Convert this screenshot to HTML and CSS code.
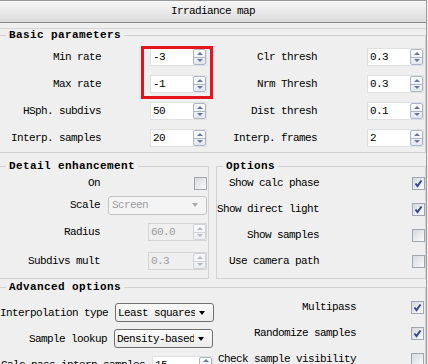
FILE: index.html
```html
<!DOCTYPE html>
<html lang="en">

<head>
    <meta charset="UTF-8">
    <meta name="viewport" content="width=device-width, initial-scale=1.0">
    <title>Irradiance map</title>
    <link rel="stylesheet" href="styles.css">
</head>

<body>
    <div class="panel">
        <div class="titlebar">Irradiance map</div>
        <div class="title-gap"></div>

        <!-- Basic parameters -->
        <fieldset class="group basic">
            <legend>Basic parameters</legend>
            <div class="basic-cols">
                <div class="basic-col left">
                    <div class="highlight"></div>
                    <div class="prow">
                        <span class="lbl">Min rate</span>
                        <div class="spin"><span class="spin-val">-3</span><span class="spin-btns"><i class="up"></i><i class="down"></i></span></div>
                    </div>
                    <div class="prow">
                        <span class="lbl">Max rate</span>
                        <div class="spin"><span class="spin-val">-1</span><span class="spin-btns"><i class="up"></i><i class="down"></i></span></div>
                    </div>
                    <div class="prow">
                        <span class="lbl">HSph. subdivs</span>
                        <div class="spin"><span class="spin-val">50</span><span class="spin-btns"><i class="up"></i><i class="down"></i></span></div>
                    </div>
                    <div class="prow">
                        <span class="lbl">Interp. samples</span>
                        <div class="spin"><span class="spin-val">20</span><span class="spin-btns"><i class="up"></i><i class="down"></i></span></div>
                    </div>
                </div>
                <div class="basic-col right">
                    <div class="prow">
                        <span class="lbl">Clr thresh</span>
                        <div class="spin"><span class="spin-val">0.3</span><span class="spin-btns"><i class="up"></i><i class="down"></i></span></div>
                    </div>
                    <div class="prow">
                        <span class="lbl">Nrm Thresh</span>
                        <div class="spin"><span class="spin-val">0.3</span><span class="spin-btns"><i class="up"></i><i class="down"></i></span></div>
                    </div>
                    <div class="prow">
                        <span class="lbl">Dist thresh</span>
                        <div class="spin"><span class="spin-val">0.1</span><span class="spin-btns"><i class="up"></i><i class="down"></i></span></div>
                    </div>
                    <div class="prow">
                        <span class="lbl">Interp. frames</span>
                        <div class="spin"><span class="spin-val">2</span><span class="spin-btns"><i class="up"></i><i class="down"></i></span></div>
                    </div>
                </div>
            </div>
        </fieldset>

        <div class="pair">
            <!-- Detail enhancement -->
            <fieldset class="group detail">
                <legend>Detail enhancement</legend>
                <div class="drow">
                    <span class="lbl">On</span>
                    <span class="chk"></span>
                </div>
                <div class="drow">
                    <span class="lbl">Scale</span>
                    <div class="drop disabled scale"><span class="drop-text">Screen</span><span class="drop-arrow"></span></div>
                </div>
                <div class="drow">
                    <span class="lbl">Radius</span>
                    <div class="spin disabled wide"><span class="spin-val">60.0</span><span class="spin-btns"><i class="up"></i><i class="down"></i></span></div>
                </div>
                <div class="drow">
                    <span class="lbl">Subdivs mult</span>
                    <div class="spin disabled wide"><span class="spin-val">0.3</span><span class="spin-btns"><i class="up"></i><i class="down"></i></span></div>
                </div>
            </fieldset>

            <!-- Options -->
            <fieldset class="group options">
                <legend>Options</legend>
                <div class="opt-list">
                    <div class="orow">
                        <span class="lbl">Show calc phase</span>
                        <span class="chk on"><svg width="11" height="11" viewBox="0 0 11 11"><path d="M2.5 5.5 L4.5 8 L8.5 2.5" /></svg></span>
                    </div>
                    <div class="orow">
                        <span class="lbl">Show direct light</span>
                        <span class="chk on"><svg width="11" height="11" viewBox="0 0 11 11"><path d="M2.5 5.5 L4.5 8 L8.5 2.5" /></svg></span>
                    </div>
                    <div class="orow">
                        <span class="lbl">Show samples</span>
                        <span class="chk"></span>
                    </div>
                    <div class="orow">
                        <span class="lbl">Use camera path</span>
                        <span class="chk"></span>
                    </div>
                </div>
            </fieldset>
        </div>

        <!-- Advanced options -->
        <fieldset class="group advanced">
            <legend>Advanced options</legend>
            <div class="adv-cols">
                <div class="adv-col left">
                    <div class="arow">
                        <span class="lbl">Interpolation type</span>
                        <div class="drop"><span class="drop-text">Least squares fit (good/smooth)</span><span class="drop-arrow"></span></div>
                    </div>
                    <div class="arow">
                        <span class="lbl">Sample lookup</span>
                        <div class="drop"><span class="drop-text">Density-based (best)</span><span class="drop-arrow"></span></div>
                    </div>
                    <div class="arow">
                        <span class="lbl">Calc pass interp samples</span>
                        <div class="spin calc"><span class="spin-val">15</span><span class="spin-btns"><i class="up"></i><i class="down"></i></span></div>
                    </div>
                </div>
                <div class="adv-col right">
                    <div class="orow">
                        <span class="lbl">Multipass</span>
                        <span class="chk on"><svg width="11" height="11" viewBox="0 0 11 11"><path d="M2.5 5.5 L4.5 8 L8.5 2.5" /></svg></span>
                    </div>
                    <div class="orow">
                        <span class="lbl">Randomize samples</span>
                        <span class="chk on"><svg width="11" height="11" viewBox="0 0 11 11"><path d="M2.5 5.5 L4.5 8 L8.5 2.5" /></svg></span>
                    </div>
                    <div class="orow">
                        <span class="lbl">Check sample visibility</span>
                        <span class="chk"></span>
                    </div>
                </div>
            </div>
        </fieldset>
    </div>
</body>

</html>
```

FILE: styles.css
```css
:root {
    --panel-bg: #efefef;
    /* rollout background */
    --frame: #d2d2d2;
    /* group box lines */
    --spin-border: #aab5c6;
    --arrow: #66789a;
    --disabled-text: #9c9c9c;
}

body {
    margin: 0;
    background-color: var(--panel-bg);
    font-family: "Liberation Mono", "DejaVu Sans Mono", monospace;
    font-size: 11px;
    letter-spacing: -0.6px;
    color: #000;
}

.panel {
    width: 426px;
    min-height: 380px;
    border-right: 1px solid #9c9c9c;
}

/* Rollout title */
.titlebar {
    height: 21px;
    line-height: 21px;
    text-align: center;
    border-top: 1px solid #9a9a9a;
    border-bottom: 1px solid #8a8a8a;
    background: linear-gradient(#f7f7f7, #dcdcdc);
}

.title-gap {
    height: 5px;
    border-bottom: 1px solid #d6d6d6;
}

/* Group boxes */
.group {
    position: relative;
    margin: 0;
    padding: 0;
    min-width: 0;
    border: 1px solid var(--frame);
    border-left: none;
}

.group legend {
    margin-left: 6px;
    padding: 0 3px;
    line-height: 13px;
    font-weight: bold;
    letter-spacing: 0.4px;
}

.lbl {
    white-space: nowrap;
    text-align: right;
}

/* Basic parameters */
.basic {
    padding: 6px 0 5px 0;
}

.basic-cols {
    display: flex;
}

.basic-col {
    position: relative;
    display: flex;
    flex-direction: column;
    gap: 9px;
}

.basic-col.left {
    width: 214px;
}

.basic-col .prow {
    display: flex;
    align-items: center;
    height: 18px;
}

.basic-col.left .lbl {
    width: 101px;
    margin-right: 49px;
}

.basic-col.right .lbl {
    width: 103px;
    margin-right: 50px;
}

.highlight {
    position: absolute;
    left: 141px;
    top: -2px;
    width: 66px;
    height: 47px;
    border: 3px solid #e5131b;
}

/* Spinner field */
.spin {
    display: flex;
    box-sizing: border-box;
    width: 57px;
    height: 18px;
    background: #fff;
    border: 1px solid #e0e0e0;
}

.spin-val {
    flex: 1;
    padding-left: 2px;
    line-height: 16px;
    overflow: hidden;
}

.spin-btns {
    display: flex;
    flex-direction: column;
    width: 11px;
    border: 1px solid var(--spin-border);
    border-radius: 2px;
    background: linear-gradient(#fdfdfd, #e3e7ee);
}

.spin-btns i {
    flex: 1;
    display: flex;
    align-items: center;
    justify-content: center;
}

.spin-btns i.up {
    border-bottom: 1px solid var(--spin-border);
}

.spin-btns i.up::before {
    content: "";
    border-left: 3px solid transparent;
    border-right: 3px solid transparent;
    border-bottom: 3px solid var(--arrow);
}

.spin-btns i.down::before {
    content: "";
    border-left: 3px solid transparent;
    border-right: 3px solid transparent;
    border-top: 3px solid var(--arrow);
}

.spin.wide {
    width: 59px;
}

.spin.calc {
    width: 61px;
}

.spin.disabled {
    background: var(--panel-bg);
    border-color: #d4d4d4;
    color: var(--disabled-text);
}

.spin.disabled .spin-btns {
    border-color: #cfd3d9;
    background: linear-gradient(#fafafa, #eceef1);
}

.spin.disabled .spin-btns i.up {
    border-bottom-color: #cfd3d9;
}

.spin.disabled .spin-btns i.up::before {
    border-bottom-color: #b4b9c2;
}

.spin.disabled .spin-btns i.down::before {
    border-top-color: #b4b9c2;
}

/* Checkbox */
.chk {
    display: flex;
    align-items: center;
    justify-content: center;
    box-sizing: border-box;
    width: 13px;
    height: 13px;
    border: 1px solid #9ea6b0;
    background: linear-gradient(135deg, #d6d8dc, #fbfbfb);
}

.chk svg path {
    fill: none;
    stroke: #34488e;
    stroke-width: 2;
}

/* Dropdown */
.drop {
    display: flex;
    align-items: center;
    box-sizing: border-box;
    width: 99px;
    height: 19px;
    border: 1px solid #6f6f6f;
    border-radius: 3px;
    background: linear-gradient(#fafafa, #ececec);
}

.drop-text {
    flex: 1;
    padding-left: 2px;
    white-space: nowrap;
    overflow: hidden;
}

.drop-arrow {
    display: flex;
    width: 18px;
    padding-left: 4px;
    box-sizing: border-box;
}

.drop-arrow::before {
    content: "";
    border-left: 3px solid transparent;
    border-right: 3px solid transparent;
    border-top: 4px solid #000;
}

.drop.disabled {
    border-color: #c4c4c4;
    background: #f4f4f4;
    color: var(--disabled-text);
}

.drop.disabled .drop-arrow::before {
    border-top-color: #a8a8a8;
}

.drop.scale .drop-text {
    padding-left: 3px;
}

/* Detail enhancement / Options */
.pair {
    display: flex;
    margin-top: 7px;
}

.detail {
    box-sizing: border-box;
    width: 209px;
    padding: 0 1px 3px 0;
    display: grid;
    grid-template-rows: 20px 24px 30px 28px;
}

.drow {
    display: flex;
    align-items: center;
    justify-content: space-between;
}

.drow .lbl {
    width: 100px;
}

.options {
    flex: 1;
    margin-left: 7px;
    border-left: 1px solid var(--frame);
    padding: 0;
}

.opt-list {
    display: grid;
    grid-auto-rows: 26px;
    margin-top: -3px;
}

.orow {
    display: flex;
    align-items: center;
    justify-content: space-between;
}

.options .lbl {
    width: 102px;
}

/* Advanced options */
.advanced {
    margin-top: 2px;
    padding: 0;
}

.adv-cols {
    display: flex;
}

.adv-col {
    display: flex;
    flex-direction: column;
    gap: 7px;
}

.adv-col.left {
    width: 213px;
    padding-top: 9px;
}

.adv-col.right {
    flex: 1;
    gap: 0;
}

.arow {
    display: flex;
    align-items: center;
    height: 19px;
}

.arow .lbl {
    flex: 1;
    margin-right: 7px;
}

.adv-col.right .orow {
    height: 26px;
}

.adv-col.right .orow .lbl {
    width: 143px;
}

.adv-col.right .chk {
    margin-right: 1px;
}
```
